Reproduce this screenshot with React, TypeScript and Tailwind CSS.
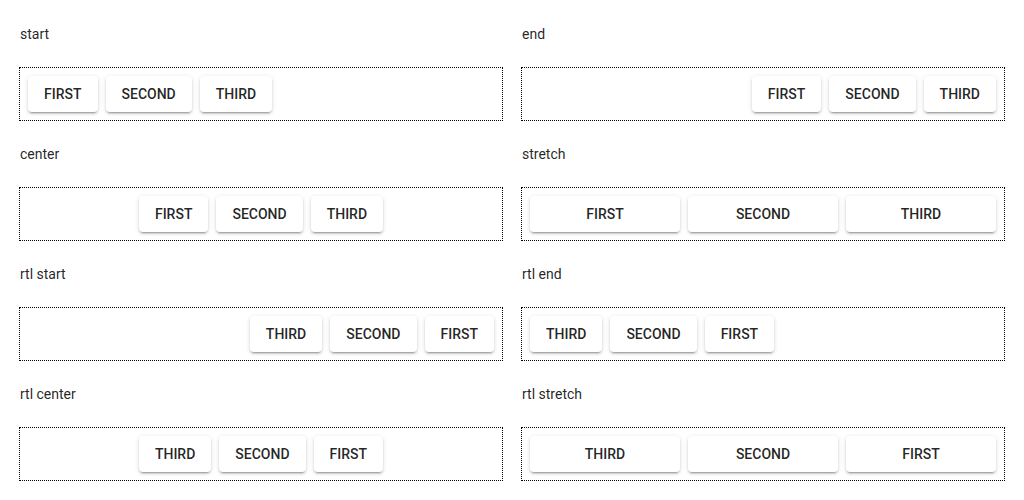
const sections = [
  { label: "start", justify: "justify-start", rtl: false, stretch: false },
  { label: "end", justify: "justify-end", rtl: false, stretch: false },
  { label: "center", justify: "justify-center", rtl: false, stretch: false },
  { label: "stretch", justify: "justify-start", rtl: false, stretch: true },
  { label: "rtl start", justify: "justify-start", rtl: true, stretch: false },
  { label: "rtl end", justify: "justify-end", rtl: true, stretch: false },
  { label: "rtl center", justify: "justify-center", rtl: true, stretch: false },
  { label: "rtl stretch", justify: "justify-start", rtl: true, stretch: true },
];

const buttons = ["First", "Second", "Third"];

function Button({ text, stretch }: { text: string; stretch: boolean }) {
  return (
    <button
      className={`h-9 min-w-16 rounded bg-white px-4 text-sm font-medium uppercase leading-9 text-black/[0.87] shadow-[0_3px_1px_-2px_rgba(0,0,0,0.2),0_2px_2px_0_rgba(0,0,0,0.14),0_1px_5px_0_rgba(0,0,0,0.12)] ${
        stretch ? "flex-1" : ""
      }`}
    >
      {text}
    </button>
  );
}

export default function App() {
  return (
    <div
      className="min-h-screen bg-white px-[19px] pt-6 text-black/[0.87]"
      style={{ fontFamily: "Roboto, 'Liberation Sans', sans-serif" }}
    >
      <div className="grid grid-cols-2 gap-x-[18px] gap-y-[23px]">
        {sections.map((s) => (
          <div key={s.label}>
            <div className="mb-[23px] pl-px text-sm leading-5">{s.label}</div>
            <div
              dir={s.rtl ? "rtl" : "ltr"}
              className={`flex gap-2 border border-dotted border-black p-2 ${s.justify}`}
            >
              {buttons.map((b) => (
                <Button key={b} text={b} stretch={s.stretch} />
              ))}
            </div>
          </div>
        ))}
      </div>
    </div>
  );
}
